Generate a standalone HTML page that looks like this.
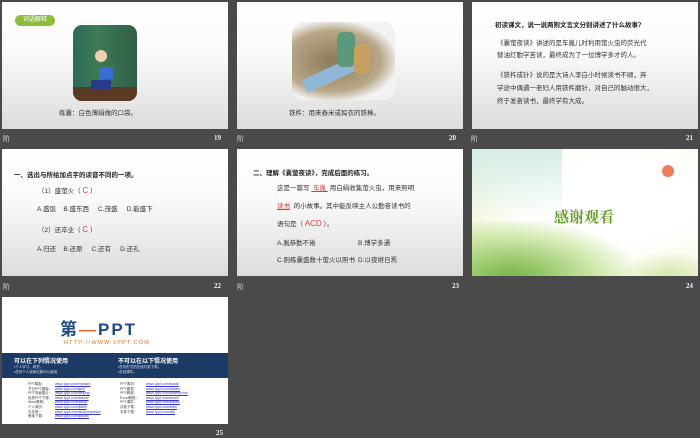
<!DOCTYPE html>
<html><head><meta charset="utf-8"><style>
*{margin:0;padding:0;box-sizing:border-box}
body{width:700px;height:438px;background:#4a4a4a;position:relative;overflow:hidden;font-family:"Liberation Sans","Noto Sans CJK SC",sans-serif}
.s{position:absolute;width:226px;height:127px;background:linear-gradient(#fff,#fafafa 40%,#dcdcdc);overflow:hidden;color:#333}
.l{position:absolute;font-size:7px;color:#ddd}
.n{position:absolute;font-size:7px;color:#eee;font-weight:bold;font-family:"Liberation Serif",serif}
.t{position:absolute;font-size:6.5px;white-space:nowrap;color:#333}
.b{font-weight:bold;color:#222}
.r{color:#e53935}
</style></head><body>
<!-- row1 -->
<div class="s" style="left:2px;top:2px">
<div style="position:absolute;left:13px;top:13px;width:40px;height:11px;border-radius:6px;background:#8bbd3b;color:#fff;font-size:6px;line-height:11px;text-align:center">词语解释</div>
<div style="position:absolute;left:71px;top:23px;width:64px;height:76px;border-radius:9px;background:linear-gradient(90deg,#2e6b5a,#3d7a55 40%,#2f5e48);overflow:hidden">
<div style="position:absolute;left:0;bottom:0;width:64px;height:14px;background:#5a3a22"></div>
<div style="position:absolute;left:26px;top:42px;width:14px;height:12px;background:#3a6dd4"></div>
<div style="position:absolute;left:22px;top:25px;width:12px;height:12px;border-radius:50%;background:#f0d0b0"></div>
<div style="position:absolute;left:18px;top:55px;width:20px;height:10px;background:#2b3b8c"></div></div>
<div class="t" style="left:57px;top:105px">练囊：白色薄绢做的口袋。</div></div>
<div class="l" style="left:3px;top:134px">阶</div><div class="n" style="left:214px;top:134px">19</div>

<div class="s" style="left:237px;top:2px">
<div style="position:absolute;left:55px;top:20px;width:103px;height:78px;border-radius:12px;background:radial-gradient(ellipse at 40% 50%,#8a7a55,#b8a888 55%,#f2f2f2 75%)">
<div style="position:absolute;left:10px;top:45px;width:60px;height:14px;background:#8fb8d8;transform:rotate(-25deg)"></div>
<div style="position:absolute;left:45px;top:10px;width:18px;height:35px;background:#5a9a7a;border-radius:6px"></div>
<div style="position:absolute;left:62px;top:22px;width:16px;height:30px;background:#c8a060;border-radius:6px"></div></div>
<div class="t" style="left:52px;top:105px">铁杵：用来舂米或捣衣的铁棒。</div></div>
<div class="l" style="left:237px;top:134px">阶</div><div class="n" style="left:449px;top:134px">20</div>

<div class="s" style="left:472px;top:2px">
<div class="t b" style="left:23px;top:17px">初读课文，说一说两则文言文分别讲述了什么故事？</div>
<div class="t" style="left:25px;top:35px">《囊萤夜读》讲述的是车胤儿时利用萤火虫的荧光代</div>
<div class="t" style="left:25px;top:47px">替油灯勤学苦读，最终成为了一位博学多才的人。</div>
<div class="t" style="left:25px;top:67px">《铁杵成针》说的是大诗人李白小时候读书不顺，弃</div>
<div class="t" style="left:25px;top:80px">学途中偶遇一老妇人用铁杵磨针，对自己的触动很大，</div>
<div class="t" style="left:25px;top:93px">终于发奋读书，最终学有大成。</div></div>
<div class="l" style="left:471px;top:134px">阶</div><div class="n" style="left:686px;top:134px">21</div>
<!-- row2 -->
<div class="s" style="left:2px;top:149px">
<div class="t b" style="left:12px;top:20px">一、选出与所给加点字的读音不同的一项。</div>
<div class="t" style="left:36px;top:36px">（1）盛萤火（ <span class="r" style="font-size:8px">C</span> ）</div>
<div class="t" style="left:35px;top:54px">A.盛饭 &nbsp;&nbsp;&nbsp;B.盛东西 &nbsp;&nbsp;&nbsp;&nbsp;C.茂盛 &nbsp;&nbsp;&nbsp;&nbsp;D.能盛下</div>
<div class="t" style="left:36px;top:75px">（2）还卒业（ <span class="r" style="font-size:8px">C</span> ）</div>
<div class="t" style="left:35px;top:94px">A.归还 &nbsp;&nbsp;&nbsp;B.还原 &nbsp;&nbsp;&nbsp;&nbsp;C.还有 &nbsp;&nbsp;&nbsp;&nbsp;D.还礼</div></div>
<div class="l" style="left:3px;top:282px">阶</div><div class="n" style="left:214px;top:282px">22</div>

<div class="s" style="left:237px;top:149px">
<div class="t b" style="left:16px;top:18px">二、理解《囊萤夜读》，完成后面的练习。</div>
<div class="t" style="left:40px;top:33px">这是一篇写 <u class="r">&nbsp;车胤&nbsp;</u> 用白绢收集萤火虫，用来照明</div>
<div class="t" style="left:40px;top:51px"><u class="r">读书</u> &nbsp;的小故事。其中能反映主人公勤奋读书的</div>
<div class="t" style="left:40px;top:69px">语句是（ <span class="r" style="font-size:8px">ACD</span> ）。</div>
<div class="t" style="left:40px;top:88px">A.胤恭勤不倦</div><div class="t" style="left:121px;top:88px">B.博学多通</div>
<div class="t" style="left:40px;top:105px">C.则练囊盛数十萤火以照书</div><div class="t" style="left:121px;top:105px">D.以夜继日焉</div></div>
<div class="l" style="left:237px;top:282px">阶</div><div class="n" style="left:452px;top:282px">23</div>

<div class="s" style="left:472px;top:149px;background:radial-gradient(ellipse at 65% 40%,#fff 35%,#fbfdf4 55%,#eef5d8 80%,#dbeab8);">
<div style="position:absolute;left:0;top:0;width:90px;height:127px;background:linear-gradient(#d6ede6,rgba(255,255,255,0) 55%)"></div>
<div style="position:absolute;left:0;bottom:0;width:160px;height:55px;background:radial-gradient(ellipse at 25% 100%,#7ab548,rgba(170,215,110,0.5) 50%,rgba(255,255,255,0) 75%)"></div>
<div style="position:absolute;left:150px;bottom:0;width:76px;height:25px;background:radial-gradient(ellipse at 60% 100%,rgba(200,225,150,0.7),rgba(255,255,255,0) 70%)"></div>
<div style="position:absolute;left:190px;top:16px;width:12px;height:12px;border-radius:50%;background:#f07a5a"></div>
<div style="position:absolute;left:82px;top:57px;font-size:15px;font-weight:bold;color:#6aa02a;font-family:'Liberation Sans','Noto Serif CJK SC',serif">感谢观看</div></div>
<div class="n" style="left:686px;top:282px">24</div>
<!-- row3 -->
<div class="s" style="left:2px;top:297px;background:#fff">
<div style="position:absolute;left:58px;top:18px;width:112px;font-size:17px;font-weight:bold;color:#1e4a86;letter-spacing:2px;white-space:nowrap">第<span style="color:#e07020">—</span>PPT</div>
<div style="position:absolute;left:62px;top:43px;font-size:5.5px;color:#e07020;letter-spacing:1.2px">HTTP://WWW.1PPT.COM</div>
<div style="position:absolute;left:0;top:56px;width:226px;height:25px;background:#1c3a66"></div>
<div style="position:absolute;left:12px;top:59px;font-size:6px;color:#fff;font-weight:bold">可以在下列情况使用</div>
<div style="position:absolute;left:116px;top:59px;font-size:6px;color:#fff;font-weight:bold">不可以在以下情况使用</div>
<div style="position:absolute;left:12px;top:68px;font-size:3.5px;color:#dde;line-height:5px">•个人学习、研究。<br>•任何个人或单位都可以使用</div>
<div style="position:absolute;left:116px;top:68px;font-size:3.5px;color:#dde;line-height:5px">•任何形式的在线付费下载。<br>•在线课件。</div>
<div style="position:absolute;left:26px;top:85px;font-size:3.5px;color:#444;line-height:4.6px">PPT模板：<br>节日PPT模板：<br>PPT背景图片：<br>优秀PPT下载：<br>Word教程：<br>个人简历：<br>手抄报：<br>教案下载：</div>
<div style="position:absolute;left:53px;top:85px;font-size:3.5px;color:#33c;line-height:4.6px;text-decoration:underline">www.1ppt.com/moban/<br>www.1ppt.com/jieri/<br>www.1ppt.com/beijing/<br>www.1ppt.com/xiazai/<br>www.1ppt.com/word/<br>www.1ppt.com/jianli/<br>www.1ppt.com/shouchaobao/<br>www.1ppt.com/jiaoan/</div>
<div style="position:absolute;left:118px;top:85px;font-size:3.5px;color:#444;line-height:4.6px">PPT素材：<br>PPT图表：<br>PPT教程：<br>Excel教程：<br>PPT课件：<br>试卷下载：<br>字体下载：</div>
<div style="position:absolute;left:144px;top:85px;font-size:3.5px;color:#33c;line-height:4.6px;text-decoration:underline">www.1ppt.com/sucai/<br>www.1ppt.com/tubiao/<br>www.1ppt.com/powerpoint/<br>www.1ppt.com/excel/<br>www.1ppt.com/kejian/<br>www.1ppt.com/shiti/<br>www.1ppt.com/ziti/</div></div>
<div class="n" style="left:216px;top:429px">25</div>
</body></html>
